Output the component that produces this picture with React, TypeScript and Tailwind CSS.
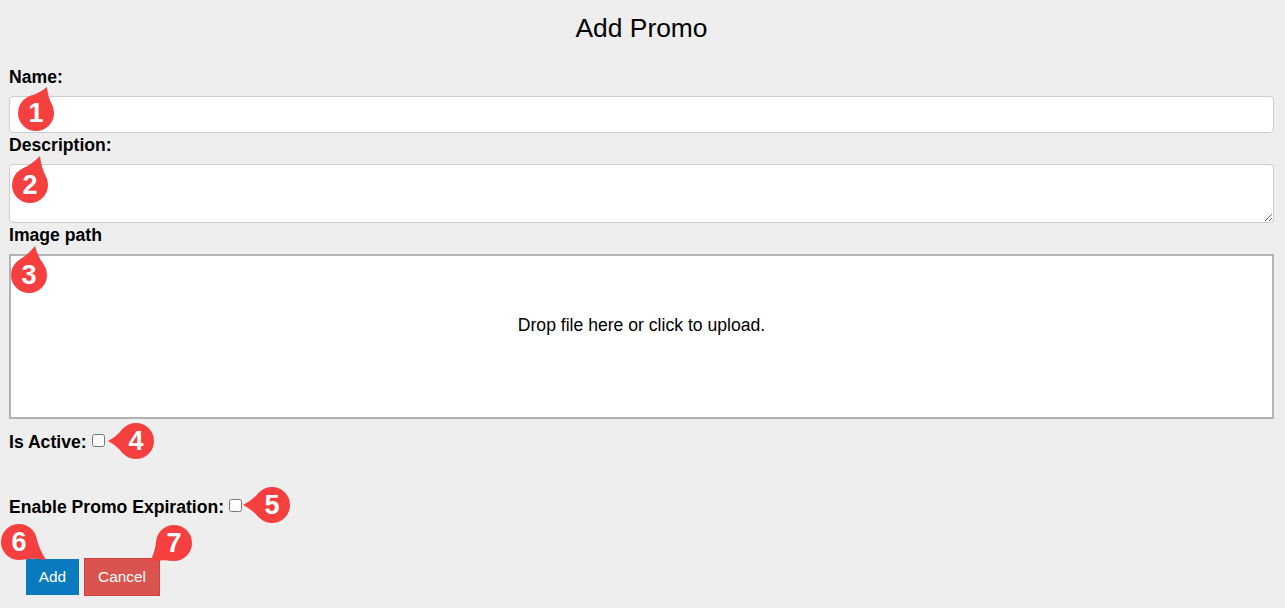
type PinProps = {
  n: number;
  className: string;
  tipX: number;
  tipY: number;
};

// numbered callout: circle plus a curved tail, tip is relative to the circle's centre
const Pin = ({ n, className, tipX, tipY }: PinProps) => {
  const angle = Math.atan2(tipY, tipX);
  const r = 18;
  const a = angle - 0.75;
  const b = angle + 0.75;
  const ax = r * Math.cos(a);
  const ay = r * Math.sin(a);
  const bx = r * Math.cos(b);
  const by = r * Math.sin(b);
  // tail sides bow in a little
  const c1x = (ax + tipX) / 2 - Math.cos(a) * 2;
  const c1y = (ay + tipY) / 2 - Math.sin(a) * 2;
  const c2x = (bx + tipX) / 2 - Math.cos(b) * 2;
  const c2y = (by + tipY) / 2 - Math.sin(b) * 2;
  return (
    <div className={`absolute w-9 h-9 rounded-full bg-[#f63f3f] flex items-center justify-center ${className}`}>
      <svg className="absolute left-[18px] top-[18px] overflow-visible" width="1" height="1">
        <path d={`M${ax} ${ay} Q${c1x} ${c1y} ${tipX} ${tipY} Q${c2x} ${c2y} ${bx} ${by}Z`} fill="#f63f3f" />
      </svg>
      <span className="relative text-white font-bold text-[27px] leading-none">{n}</span>
    </div>
  );
};

const App = () => {
  return (
    <div className="relative min-h-screen bg-[#eeeeee] text-black text-[17.6px] font-['Liberation_Sans',Arial,sans-serif] overflow-hidden">
      <h1 className="h-[56px] pt-[2px] pr-[2px] flex items-center justify-center text-[26.4px] font-normal">Add Promo</h1>

      <form className="flex flex-col pl-[9px] pr-[11px] mt-[11px]">
        {/* name */}
        <label className="h-5 leading-5 font-bold mb-[9px]">Name:</label>
        <input type="text" className="h-[37px] bg-white border border-[#cccccc] rounded" />

        {/* description */}
        <label className="h-5 leading-5 font-bold mt-[2px] mb-[9px]">Description:</label>
        <textarea className="h-[59px] bg-white border border-[#cccccc] rounded block" />

        {/* image path */}
        <label className="h-5 leading-5 font-bold mt-[2px] mb-[9px]">Image path</label>
        <div className="h-[165px] pb-[22px] bg-white border-2 border-[#b3b3b3] flex items-center justify-center">
          Drop file here or click to upload.
        </div>

        {/* checkboxes */}
        <div className="h-5 mt-[13px] flex items-center font-bold leading-5">
          <span>Is Active:</span>
          <input type="checkbox" className="ml-[5px] mb-1 w-[13px] h-[13px]" />
        </div>
        <div className="h-5 mt-[45px] flex items-center font-bold leading-5">
          <span>Enable Promo Expiration:</span>
          <input type="checkbox" className="ml-[5px] mb-1 w-[13px] h-[13px]" />
        </div>

        {/* buttons */}
        <div className="mt-[41px] pl-[17px] flex items-center gap-[5px]">
          <button type="button" className="w-[53px] h-9 bg-[#0a7abf] text-white text-[15.4px]">Add</button>
          <button type="button" className="w-[76px] h-[38px] bg-[#d9534f] border border-[#d43f3a] text-white text-[15.4px]">Cancel</button>
        </div>
      </form>

      <Pin n={1} className="left-[18px] top-[95px]" tipX={11} tipY={-26} />
      <Pin n={2} className="left-[12px] top-[167px]" tipX={10} tipY={-29} />
      <Pin n={3} className="left-[11px] top-[257px]" tipX={6} tipY={-29} />
      <Pin n={4} className="left-[118px] top-[423px]" tipX={-28} tipY={0} />
      <Pin n={5} className="left-[254px] top-[487px]" tipX={-29} tipY={0} />
      <Pin n={6} className="left-[1px] top-[524px]" tipX={27} tipY={18} />
      <Pin n={7} className="left-[156px] top-[525px]" tipX={-24} tipY={19} />
    </div>
  );
};

export default App;
